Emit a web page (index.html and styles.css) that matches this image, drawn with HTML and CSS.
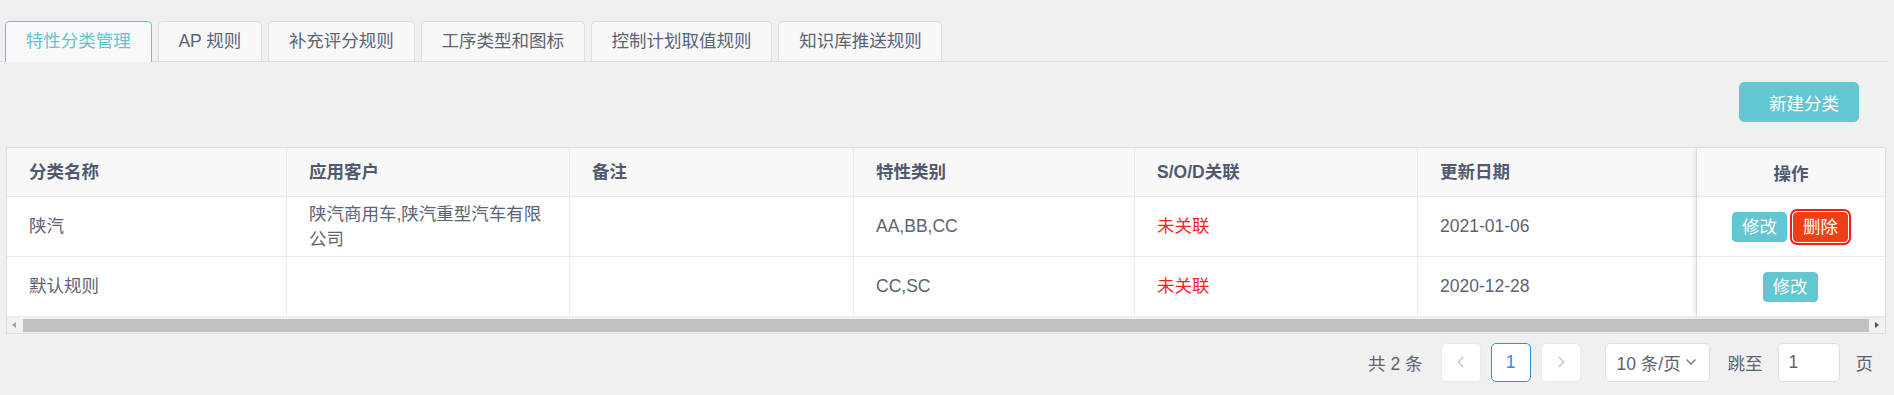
FILE: index.html
```html
<!DOCTYPE html>
<html lang="zh-CN">
<head>
  <meta charset="UTF-8" />
  <meta name="viewport" content="width=device-width, initial-scale=1" />
  <title>特性分类管理</title>
  <link rel="stylesheet" href="styles.css">
</head>
<body>
  <div class="tabs">
    <div class="tab active">特性分类管理</div>
    <div class="tab">AP 规则</div>
    <div class="tab">补充评分规则</div>
    <div class="tab">工序类型和图标</div>
    <div class="tab">控制计划取值规则</div>
    <div class="tab">知识库推送规则</div>
  </div>

  <div class="toolbar">
    <button class="btn-new">新建分类</button>
  </div>

  <div class="table">
    <div class="table-body">
      <div class="table-main">
        <div class="row head">
          <div class="cell">分类名称</div>
          <div class="cell">应用客户</div>
          <div class="cell">备注</div>
          <div class="cell">特性类别</div>
          <div class="cell">S/O/D关联</div>
          <div class="cell">更新日期</div>
        </div>
        <div class="row">
          <div class="cell">陕汽</div>
          <div class="cell">陕汽商用车,陕汽重型汽车有限公司</div>
          <div class="cell"></div>
          <div class="cell">AA,BB,CC</div>
          <div class="cell red">未关联</div>
          <div class="cell">2021-01-06</div>
        </div>
        <div class="row">
          <div class="cell">默认规则</div>
          <div class="cell"></div>
          <div class="cell"></div>
          <div class="cell">CC,SC</div>
          <div class="cell red">未关联</div>
          <div class="cell">2020-12-28</div>
        </div>
      </div>
      <div class="table-fixed">
        <div class="fcell head">操作</div>
        <div class="fcell">
          <button class="btn-sm edit">修改</button>
          <button class="btn-sm del">删除</button>
        </div>
        <div class="fcell">
          <button class="btn-sm edit">修改</button>
        </div>
      </div>
    </div>
    <div class="scrollbar">
      <div class="sb-arrow left"></div>
      <div class="sb-thumb"></div>
      <div class="sb-arrow right"></div>
    </div>
  </div>

  <div class="pager">
    <span class="total">共 2 条</span>
    <div class="pg-item disabled">
      <svg width="10" height="14" viewBox="0 0 10 14"><polyline points="7,2 2.5,7 7,12" fill="none" stroke="#c5c8ce" stroke-width="1.5"/></svg>
    </div>
    <div class="pg-item current">1</div>
    <div class="pg-item disabled">
      <svg width="10" height="14" viewBox="0 0 10 14"><polyline points="3,2 7.5,7 3,12" fill="none" stroke="#c5c8ce" stroke-width="1.5"/></svg>
    </div>
    <div class="pg-select">
      <span>10 条/页</span>
      <svg width="12" height="8" viewBox="0 0 12 8"><polyline points="1.5,1.5 6,6 10.5,1.5" fill="none" stroke="#808695" stroke-width="1.6"/></svg>
    </div>
    <span class="jump">跳至</span>
    <div class="pg-input">1</div>
    <span class="unit">页</span>
  </div>
</body>
</html>
```

FILE: styles.css
```css
body {
  margin: 0;
  background: #f0f0f0;
  font-family: "Liberation Sans", "Noto Sans CJK SC", sans-serif;
  font-size: 17.5px;
  color: #5c6374;
}

button {
  font-family: inherit;
}

/* tabs */
.tabs {
  display: flex;
  gap: 6px;
  padding: 21px 0 0 5px;
  margin-right: 6px;
  border-bottom: 1px solid #dcdee2;
}

.tab {
  height: 39px;
  line-height: 38px;
  padding: 0 19.8px;
  margin-bottom: -1px;
  border: 1px solid #dcdee2;
  border-bottom: none;
  border-radius: 5px 5px 0 0;
  background: #f8f8f9;
  color: #5c6374;
  white-space: nowrap;
}

.tab.active {
  height: 40px;
  background: #f9f9f9;
  border-color: #5fc6d0;
  color: #5fc6d0;
}

/* toolbar */
.toolbar {
  display: flex;
  justify-content: flex-end;
  padding: 20px 35px 0 0;
}

.btn-new {
  width: 120px;
  height: 40px;
  padding: 0 0 0 10px;
  border: 1px solid #62c7d1;
  border-radius: 5px;
  background: #62c7d1;
  color: #fff;
  font-size: 17.5px;
}

/* table */
.table {
  margin: 25px 8px 0 6px;
  border: 1px solid #dcdee2;
  background: #fff;
}

.table-body {
  display: flex;
}

.table-main {
  width: 1690px;
}

.row {
  display: grid;
  grid-template-columns: 280px 283px 284px 281px 283px 1fr;
  height: 60px;
}

.row.head {
  height: 49px;
  background: #f8f8f9;
  font-weight: bold;
  color: #515a6e;
}

.cell {
  box-sizing: border-box;
  display: flex;
  align-items: center;
  padding: 0 22px;
  border-right: 1px solid #e8eaec;
  border-bottom: 1px solid #e8eaec;
  line-height: 25px;
}

.cell.red {
  color: #ff1f1f;
}

.table-fixed {
  width: 188px;
  background: #fff;
  box-shadow: -3px 0 6px -2px rgba(0, 0, 0, 0.15);
  position: relative;
  z-index: 1;
}

.fcell {
  box-sizing: border-box;
  height: 60px;
  display: flex;
  align-items: center;
  justify-content: center;
  gap: 6px;
  border-bottom: 1px solid #e8eaec;
  padding-right: 2px;
}

.fcell.head {
  height: 49px;
  background: #f8f8f9;
  font-weight: bold;
  color: #515a6e;
  padding-right: 0;
}

.btn-sm {
  height: 30px;
  padding: 0 9px;
  border-radius: 4px;
  font-size: 17.5px;
  color: #fff;
  line-height: 28px;
}

.btn-sm.edit {
  background: #62c7d1;
  border: 1px solid #62c7d1;
}

.btn-sm.del {
  background: #ed4014;
  border: 1px solid #ed4014;
  outline: 2px solid #ff1a1a;
  outline-offset: 1px;
}

/* scrollbar */
.scrollbar {
  display: flex;
  height: 16px;
  background: #f1f1f1;
}

.sb-arrow {
  width: 16px;
  position: relative;
}

.sb-arrow::after {
  content: "";
  position: absolute;
  top: 5px;
  border-top: 3.5px solid transparent;
  border-bottom: 3.5px solid transparent;
}

.sb-arrow.left::after {
  left: 5px;
  border-right: 4px solid #a3a3a3;
}

.sb-arrow.right::after {
  left: 6px;
  border-left: 4px solid #505050;
}

.sb-thumb {
  flex: 1;
  margin: 2px 0 1px;
  background: #c1c1c1;
}

/* pager */
.pager {
  display: flex;
  justify-content: flex-end;
  align-items: center;
  padding: 8px 21px 0 0;
  height: 40px;
}

.total {
  margin-right: 18px;
  white-space: pre;
}

.pg-item {
  box-sizing: border-box;
  width: 40px;
  height: 39px;
  margin-right: 10px;
  display: flex;
  align-items: center;
  justify-content: center;
  background: #fff;
  border: 1px solid #dcdee2;
  border-radius: 5px;
}

.pg-item.disabled {
  border-color: #e8eaec;
}

.pg-item.current {
  border-color: #2d8cf0;
  color: #2d8cf0;
}

.pg-item:nth-of-type(3) {
  margin-right: 24px;
}

.pg-select {
  box-sizing: border-box;
  width: 105px;
  height: 39px;
  display: flex;
  align-items: center;
  justify-content: space-between;
  padding: 0 12px 0 11px;
  background: #fff;
  border: 1px solid #dcdee2;
  border-radius: 5px;
  margin-right: 18px;
  white-space: nowrap;
}

.jump {
  margin-right: 15px;
}

.pg-input {
  box-sizing: border-box;
  width: 62px;
  height: 39px;
  line-height: 37px;
  padding-left: 10px;
  background: #fff;
  border: 1px solid #dcdee2;
  border-radius: 5px;
  margin-right: 16px;
}
```
